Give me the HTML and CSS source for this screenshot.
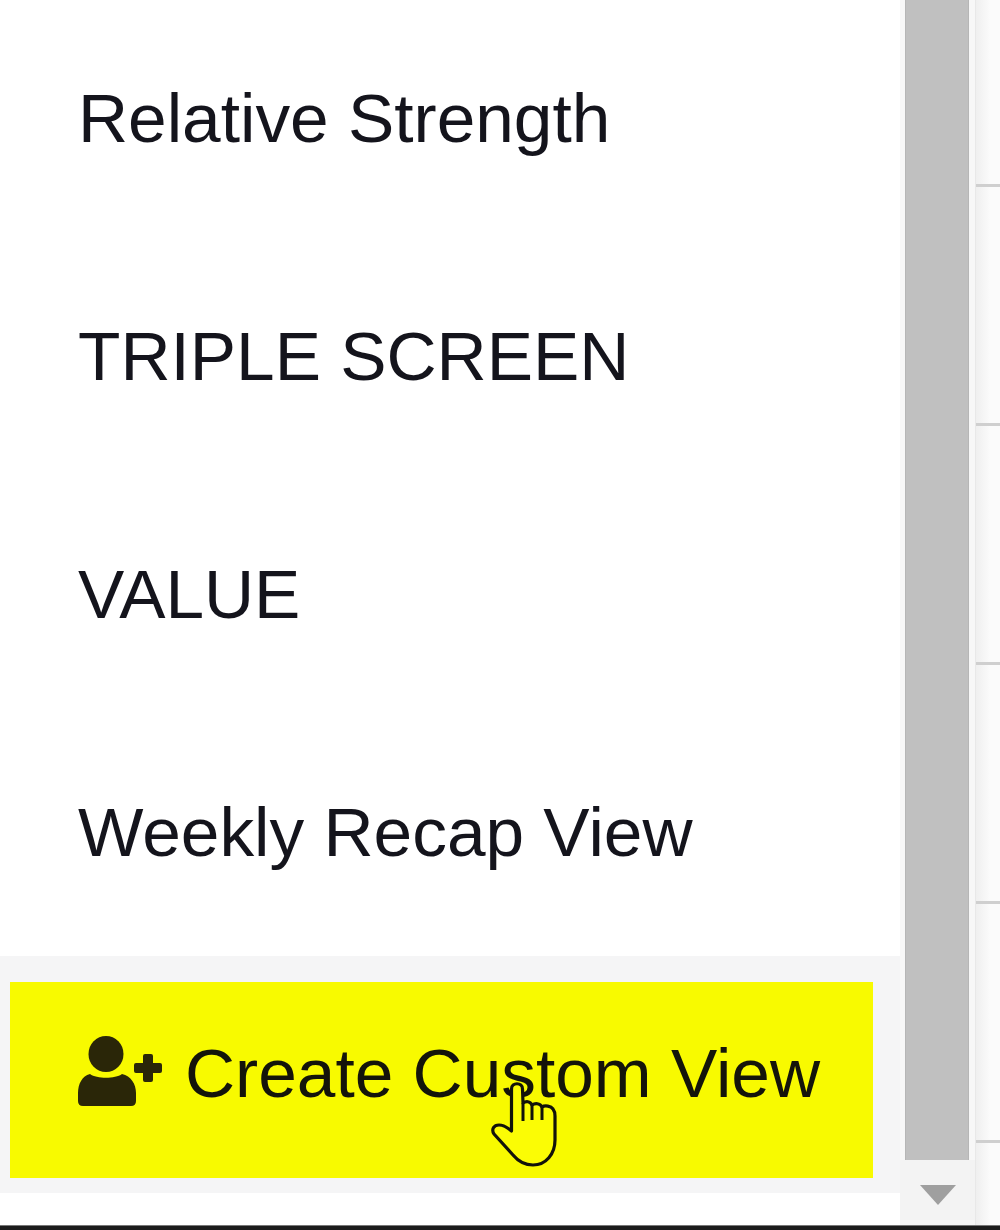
FILE: index.html
```html
<!DOCTYPE html>
<html lang="en">
<head>
<meta charset="utf-8">
<title>Views menu</title>
<link rel="stylesheet" href="styles.css">
</head>
<body>
<div class="screen">
  <div class="panel">
    <ul class="views">
      <li class="view">Relative Strength</li>
      <li class="view">TRIPLE SCREEN</li>
      <li class="view">VALUE</li>
      <li class="view">Weekly Recap View</li>
    </ul>
    <div class="footer">
      <button class="create" type="button">
        <svg class="user-icon" viewBox="0 0 86 72" aria-hidden="true">
          <ellipse cx="29" cy="18" rx="17.500" ry="18"/>
          <path d="M13 38 C20 43 38 43 45 38 C54 40 59 48 59 57 L59 65 Q59 70 54 70 L6 70 Q1 70 1 65 L1 57 C1 48 5 40 13 38 Z"/>
          <path d="M57 29 Q57 27 59 27 H66 V20 Q66 18 68 18 H74 Q76 18 76 20 V27 H83 Q85 27 85 29 V35 Q85 37 83 37 H76 V44 Q76 46 74 46 H68 Q66 46 66 44 V37 H59 Q57 37 57 35 Z"/>
        </svg>
        <span>Create Custom View</span>
        <svg class="hand" viewBox="0 0 66 86" aria-hidden="true">
          <path class="hand-fill" d="M20.500 44 L20.500 7 C20.500 0 31.500 0 31.500 7 L32 21 C35 19 39 19 41 23 C44 21 49 21 51 25 C54 23 60 24 62 27 C63.500 29 64 31 64 34 L64 58 C64 72 55 83 42 83 C33 83 27 79 22 73 L3 52 C0 47 3 43 8 43 C12 43 17 46 20.500 49 Z"/>
          <path class="hand-line" d="M32 21 L32 39 M41 23 L41 38 M51 25 L51 38"/>
        </svg>
      </button>
    </div>
    <div class="panel-end"></div>
  </div>
  <div class="scrollbar">
    <div class="thumb"></div>
    <div class="arrow-box"><div class="arrow"></div></div>
  </div>
  <div class="table-edge">
    <div class="edge-row first"></div>
    <div class="edge-row"></div>
    <div class="edge-row"></div>
    <div class="edge-row"></div>
    <div class="edge-row"></div>
  </div>
</div>
<div class="taskbar"></div>
</body>
</html>
```
FILE: styles.css
```css
* { box-sizing: border-box; }
html, body { margin: 0; padding: 0; background: #fff; }
body { width: 1000px; height: 1230px; overflow: hidden; font-family: "Liberation Sans", Arial, sans-serif; }
.screen { display: flex; height: 1225px; }
.panel { width: 900px; display: flex; flex-direction: column; background: #fff; }
.views { list-style: none; margin: 0; padding: 0; height: 956px; }
.view { height: 238px; display: flex; align-items: center; padding: 0 0 2px 78px; font-size: 69.4px; color: #14141c; }
.footer { height: 237px; background: #f5f5f6; padding: 26px 27px 15px 10px; }
.create { position: relative; width: 100%; height: 196px; border: 0; padding: 0 0 14px 67px; margin: 0; display: flex; align-items: center; gap: 22px; background: #f8fa00; color: #14140a; font: inherit; font-size: 69.4px; text-align: left; }
.user-icon { width: 86px; height: 72px; margin-bottom: 2px; fill: #2a2608; flex: none; }
.hand { position: absolute; left: 481px; top: 100px; width: 66px; height: 86px; overflow: visible; }
.hand-fill { fill: #fbfc05; stroke: #12120a; stroke-width: 3.200; stroke-linejoin: round; }
.hand-line { fill: none; stroke: #12120a; stroke-width: 3; }
.panel-end { flex: 1; background: #fff; }
.scrollbar { width: 75px; background: #f7f7f7; padding: 0 6px 0 5px; display: flex; flex-direction: column; }
.thumb { height: 1160px; background: #c0c0c0; border: 1px solid #b6b6b6; border-width: 0 1px; }
.arrow-box { flex: 1; display: flex; justify-content: center; padding-top: 25px; margin: 0 -6px 5px -5px; background: #f3f3f3; }
.arrow { width: 0; height: 0; border-left: 18px solid transparent; border-right: 18px solid transparent; border-top: 20px solid #9f9f9f; }
.table-edge { flex: 1; background: linear-gradient(90deg, #efefef, #fbfbfb 60%); border-left: 1px solid #e8e8e8; }
.edge-row { height: 239px; border-bottom: 3px solid #cfcfcf; }
.edge-row.first { height: 187px; }
.taskbar { height: 5px; background: #1c1c1c; border-top: 1px solid #777; }
```
